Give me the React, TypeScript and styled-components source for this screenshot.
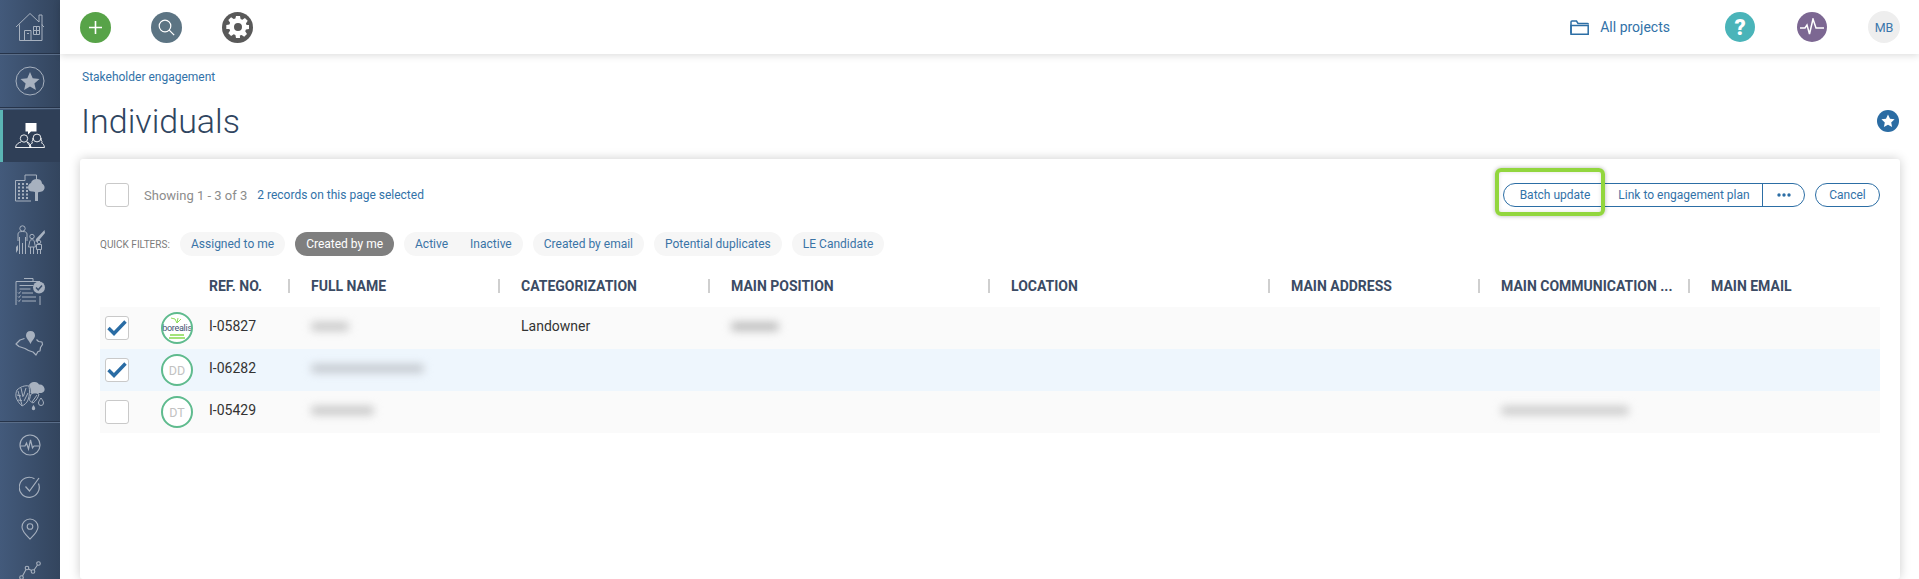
import React from "react";
import styled, { createGlobalStyle } from "styled-components";

const Global = createGlobalStyle`
  html, body { margin: 0; padding: 0; background: #fff; }
  body { font-family: Roboto, "Liberation Sans", sans-serif; }
  * { box-sizing: border-box; }
`;

const Page = styled.div`
  display: flex;
  width: 1919px;
  height: 579px;
  overflow: hidden;
  background: #fff;
`;

const Sidebar = styled.nav`
  width: 60px;
  flex: none;
  height: 579px;
  overflow: hidden;
  background: linear-gradient(90deg, #435a7b 0%, #33455e 100%);
  color: #a7b1bf;
`;

const NavItem = styled.div<{ $h: number; $active?: boolean; $line?: boolean }>`
  height: ${(p) => p.$h}px;
  display: flex;
  align-items: center;
  justify-content: center;
  color: ${(p) => (p.$active ? "#fff" : "inherit")};
  background: ${(p) => (p.$active ? "#2f3f57" : "transparent")};
  border-left: ${(p) => (p.$active ? "3px solid #5bb5b5" : "none")};
  padding-right: ${(p) => (p.$active ? "3px" : "0")};
  border-bottom: ${(p) => (p.$line ? "1px solid #26344a" : "none")};
  box-shadow: ${(p) => (p.$line ? "0 1px 0 #5a6d88" : "none")};
  flex: none;
`;

const Main = styled.div`
  flex: 1;
  min-width: 0;
  display: flex;
  flex-direction: column;
`;

const TopBar = styled.header`
  height: 54px;
  flex: none;
  display: flex;
  align-items: center;
  padding: 0 19px 0 20px;
  background: #fff;
  box-shadow: 0 2px 7px rgba(0, 0, 0, 0.13);
  position: relative;
  z-index: 2;
`;

const Round = styled.div<{ $bg: string; $size?: number }>`
  width: ${(p) => p.$size ?? 31}px;
  height: ${(p) => p.$size ?? 31}px;
  border-radius: 50%;
  background: ${(p) => p.$bg};
  color: #fff;
  display: flex;
  align-items: center;
  justify-content: center;
  flex: none;
`;

const LeftTools = styled.div`
  display: flex;
  gap: 40px;
`;

const RightTools = styled.div`
  margin-left: auto;
  display: flex;
  align-items: center;
`;

const Projects = styled.div`
  display: flex;
  align-items: center;
  gap: 11px;
  color: #3272a8;
  font-size: 14px;
  margin-right: 55px;
`;

const Help = styled(Round)`
  font-size: 22px;
  font-weight: 900;
  margin-right: 42px;
`;

const Activity = styled(Round)`
  margin-right: 41px;
`;

const UserBadge = styled(Round)`
  color: #3a76ab;
  font-size: 12.5px;
`;

const Content = styled.main`
  flex: 1;
  padding: 15px 19px 0 20px;
  display: flex;
  flex-direction: column;
  min-height: 0;
`;

const Crumb = styled.div`
  font-size: 12px;
  line-height: 16px;
  color: #3272a8;
  padding-left: 2px;
`;

const TitleRow = styled.div`
  display: flex;
  align-items: center;
  justify-content: space-between;
  height: 42px;
  margin-top: 15px;
  padding-left: 1px;
`;

const Title = styled.h1`
  margin: 0;
  font-size: 34px;
  font-weight: 300;
  line-height: 42px;
  color: #2f4560;
`;

const StarBadge = styled(Round)`
  margin-right: 1px;
`;

const Card = styled.section`
  flex: 1;
  margin-top: 17px;
  background: #fff;
  border-radius: 3px;
  box-shadow: 0 0 11px rgba(0, 0, 0, 0.2);
  padding: 24px 20px 0;
  position: relative;
`;

const CardBar = styled.div`
  display: flex;
  align-items: center;
  height: 24px;
  padding-left: 5px;
`;

const Box = styled.div`
  width: 24px;
  height: 24px;
  flex: none;
  border: 1px solid #c9c9c9;
  border-radius: 3px;
  background: #fff;
  display: flex;
  align-items: center;
  justify-content: center;
`;

const Showing = styled.span`
  margin-left: 15px;
  font-size: 13px;
  color: #8c8c8c;
`;

const Selected = styled.span`
  margin-left: 10px;
  font-size: 12px;
  color: #3272a8;
`;

const Actions = styled.div`
  margin-left: auto;
  display: flex;
  align-items: center;
  gap: 10px;
`;

const Group = styled.div`
  display: flex;
  height: 24px;
  border: 1px solid #2c6ea5;
  border-radius: 12px;
`;

const GroupBtn = styled.div<{ $w: number; $divided?: boolean }>`
  width: ${(p) => p.$w}px;
  display: flex;
  align-items: center;
  justify-content: center;
  font-size: 12px;
  color: #3272a8;
  border-left: ${(p) => (p.$divided ? "1px solid #2c6ea5" : "none")};
`;

const Cancel = styled.div`
  width: 65px;
  height: 24px;
  border: 1px solid #2c6ea5;
  border-radius: 12px;
  display: flex;
  align-items: center;
  justify-content: center;
  font-size: 12px;
  color: #3272a8;
`;

const Highlight = styled.div`
  position: absolute;
  left: 1415px;
  top: 9px;
  width: 110px;
  height: 48px;
  border: 4px solid #92d63e;
  border-radius: 6px;
  box-shadow: 0 0 4px rgba(0, 0, 0, 0.3), inset 0 0 4px rgba(0, 0, 0, 0.12);
  pointer-events: none;
`;

const Filters = styled.div`
  display: flex;
  align-items: center;
  margin-top: 25px;
  height: 24px;
  gap: 10px;
`;

const FilterLabel = styled.span`
  width: 70px;
  font-size: 10px;
  color: #7b7b7b;
  white-space: nowrap;
  text-transform: uppercase;
`;

const Pill = styled.div<{ $on?: boolean }>`
  height: 24px;
  border-radius: 12px;
  padding: 0 11px;
  display: flex;
  align-items: center;
  gap: 22px;
  font-size: 12px;
  color: ${(p) => (p.$on ? "#fff" : "#3a74a6")};
  background: ${(p) => (p.$on ? "#7f7f7f" : "#f6f6f6")};
  white-space: nowrap;
`;

const columns = "109px 79px 210px 210px 280px 280px 210px 210px 192px";

const HeadRow = styled.div`
  display: grid;
  grid-template-columns: ${columns};
  align-items: center;
  margin-top: 21px;
  height: 18px;
`;

const HeadCell = styled.div<{ $sep?: boolean }>`
  height: 14px;
  line-height: 14px;
  font-size: 14px;
  font-weight: 700;
  color: #3b4b64;
  white-space: nowrap;
  border-left: ${(p) => (p.$sep ? "2px solid #cfcfcf" : "none")};
  padding-left: ${(p) => (p.$sep ? "21px" : "0")};
`;

const Rows = styled.div`
  margin-top: 12px;
`;

const Row = styled.div<{ $tone: string }>`
  display: grid;
  grid-template-columns: ${columns};
  align-items: center;
  height: 42px;
  background: ${(p) => p.$tone};
`;

const Lead = styled.div`
  display: flex;
  align-items: center;
  padding-left: 5px;
`;

const Avatar = styled.div`
  margin-left: 32px;
  width: 32px;
  height: 32px;
  border-radius: 50%;
  border: 2px solid #5fbb8e;
  background: #fff;
  color: #c2c2c2;
  font-size: 12.5px;
  display: flex;
  align-items: center;
  justify-content: center;
  overflow: hidden;
  position: relative;
`;

const Logo = styled.span`
  font-size: 9px;
  color: #3d5270;
  letter-spacing: -0.3px;
`;

const LogoMark = styled.svg`
  position: absolute;
  left: 0;
  top: 0;
`;

const Cell = styled.div<{ $inset?: boolean }>`
  font-size: 14px;
  color: #333;
  padding-bottom: 4px;
  padding-left: ${(p) => (p.$inset ? "23px" : "0")};
  white-space: nowrap;
`;

const Blur = styled.div<{ $w: number; $shade?: string }>`
  width: ${(p) => p.$w}px;
  height: 9px;
  border-radius: 4px;
  background: ${(p) => p.$shade ?? "#c9c9c9"};
  filter: blur(4px);
`;

const Line = styled.svg.attrs({ fill: "none", stroke: "currentColor" })``;

const House = () => (
  <Line width="30" height="30" viewBox="0 0 30 30" strokeWidth="1">
    <path d="M1 15 15 1.500l9 8.500V3h3v10l2 2" />
    <path d="M4.500 12.500V28.500H27V12.500" />
    <path d="M9.500 28.500V18.500h6.500v10" />
    <path d="M12 21.500h2" />
    <path d="M18.500 14.500h6v8h-6zM21.500 14.500v8M18.500 18.500h6" />
  </Line>
);

const StarCircle = () => (
  <Line width="30" height="30" viewBox="0 0 30 30" strokeWidth="1">
    <circle cx="15" cy="15" r="14" />
    <path fill="currentColor" stroke="none" d="m15 6 2.700 6.300 6.800.6-5.100 4.500 1.500 6.600-5.900-3.500-5.900 3.500 1.500-6.600-5.100-4.500 6.800-.6z" />
  </Line>
);

const People = () => (
  <Line width="30" height="26" viewBox="0 0 30 26" strokeWidth="0.900">
    <path fill="currentColor" stroke="none" d="M10.500 0h11v8.500h-5.500l-3 3v-3h-2.500z" />
    <circle cx="9" cy="15.500" r="3.700" />
    <path d="M.5 24.500c.5-3.500 3.500-5 5.500-5.500M12 19c2 .5 3.500 2 4 5.500zM.5 24.500H16" />
    <circle cx="22" cy="15" r="3.900" />
    <path d="M18 15c-.5 2.500-.5 3.500-1.500 4M26 15c.5 2.500.5 3.500 1.500 4M18 19.500c-2 1-3 2-3.500 5h15c-.5-3-1.500-4-3.500-5" />
  </Line>
);

const BuildingTree = () => (
  <Line width="30" height="28" viewBox="0 0 30 28" strokeWidth="1">
    <path d="M.5 27V6.500H10V1h11.500v6M.5 27H16" />
    <path d="M3 10h2M7 10h2M3 13.500h2M7 13.500h2M3 17h2M7 17h2M3 20.500h2M7 20.500h2M3 24h2M7 24h2M11 10h2M11 13.500h2M11 17h2M11 20.500h2M11 24h2" strokeWidth="1.800" />
    <path fill="currentColor" stroke="none" d="M22 5c4 0 5 3 5 4.500 2 1 3 3 2.500 5-.5 2.500-3 3.500-5.500 3.500l-1 .5V27h-3v-9l-2-.5c-3 .5-5-1.500-5-4s1.500-4 3-4.500c.5-2.500 3-4 6-4z" />
  </Line>
);

const Family = () => (
  <Line width="30" height="30" viewBox="0 0 30 30" strokeWidth="1">
    <circle cx="7.500" cy="3.500" r="2.700" />
    <path d="M3 16V9c0-2 2-2.500 4.500-2.500S12 7 12 9v7M4.500 12v17M10.500 12v17M7.500 18v11" />
    <circle cx="17" cy="11.500" r="2.200" />
    <path d="M13.500 22l1.500-6.500c.5-1 3.500-1 4 0l1.500 6.500zM15.500 22v7M18.500 22v7" />
    <circle cx="24" cy="17" r="1.800" />
    <path d="M21.500 19.500h5v5h-5zM22.500 24.500V29M25.500 24.500V29" />
    <path fill="currentColor" stroke="none" d="M29.500 5 30 8l-7.500 9-2-.5L21 14zM1 22l2-2v5l-2 3z" />
  </Line>
);

const Checklist = () => (
  <Line width="30" height="28" viewBox="0 0 30 28" strokeWidth="1">
    <path d="M1 3.500h24M1 3.500V27M25 18v9M9 0.500h9v3" />
    <path d="M4.500 7.500h14M4.500 11h11M7 15h11M7 19h14M7 23h14" />
    <path d="m3 14.500 1 1 1.500-2M3 18.500l1 1 1.500-2M3 22.500l1 1 1.500-2" />
    <circle cx="24" cy="9.500" r="6" fill="currentColor" stroke="none" />
    <path d="m21 9.500 2.200 2.300L27 7.500" stroke="#3b4f6c" strokeWidth="1.500" />
  </Line>
);

const MapPin = () => (
  <Line width="30" height="26" viewBox="0 0 30 26" strokeWidth="1.200" strokeLinejoin="round">
    <path d="M9.500 7.500 5 9 1 13l3 2.500 6 2 3.500 2 4.500 1.500 3 3 2-3.500 2-.5.500-3.500 2-3-.5-2.500-3.500-.5-2-2" />
    <path fill="currentColor" stroke="none" d="M15.500 0c-3 0-4.500 2-4.500 4.500 0 3 3 5 4.500 8.500C17 9.500 20 7.500 20 4.500 20 2 18.500 0 15.500 0z" />
  </Line>
);

const Leaves = () => (
  <Line width="30" height="30" viewBox="0 0 30 30" strokeWidth="1">
    <path d="M2 9C5 6 10 4 14 5c1 5 .5 10-1 14-1 3-4 5-6 6-2-2-5-5-6-9-.3-2.500 0-5 1-7z" />
    <path d="M3 10l4 14M2 14l4 1M3 19l4 .5M6 7l2 9M11 7 8.500 15M13 12l-4 8" />
    <path fill="currentColor" stroke="none" d="M14 4c1-2 3-3.500 6-3 2 0 3 1 4 2.500 3-.5 5 1.500 5.500 4 .5 2-.5 4-3 4.500H15.500c.5-2.500 0-5.500-1.500-8z" />
    <path d="M16 13c3-1.500 5-1.500 8 0-.5 3-3 7-6 9-2-1-3.500-2-3.500-3.500.500-2 1-4 1.500-5.500zM17 21l5-7" />
    <path d="M26 17c-1.500 2.200-2.500 3.500-2.500 5a2.500 2.500 0 0 0 5 0c0-1.500-1-2.800-2.500-5z" />
    <path fill="currentColor" stroke="none" d="M18.500 24c-1 1.500-1.700 2.500-1.700 3.500a1.700 1.700 0 0 0 3.400 0c0-1-.7-2-1.700-3.500z" />
  </Line>
);

const PulseCircle = () => (
  <Line width="22" height="22" viewBox="0 0 22 22" strokeWidth="1.200">
    <circle cx="11" cy="11" r="10" />
    <path d="M1.500 12H6l1.500-3 2 6 2-9 2 8 1.500-2h5" />
  </Line>
);

const CheckCircle = () => (
  <Line width="23" height="23" viewBox="0 0 23 23" strokeWidth="1.200">
    <path d="M19.500 7.500A10 10 0 1 1 15.500 2.800" />
    <path d="m6.500 10.500 4 4.500 9.500-13" />
  </Line>
);

const Pin = () => (
  <Line width="18" height="22" viewBox="0 0 18 22" strokeWidth="1.100">
    <path d="M9 21C5 17 1 13.500 1 9a8 8 0 0 1 16 0c0 4.500-4 8-8 12z" />
    <circle cx="9" cy="8.500" r="2.800" />
  </Line>
);

const Trend = () => (
  <Line width="22" height="20" viewBox="0 0 22 20" strokeWidth="1.100">
    <circle cx="2.500" cy="16.500" r="1.800" />
    <circle cx="8" cy="7" r="1.800" />
    <circle cx="14" cy="10.500" r="1.800" />
    <circle cx="19.500" cy="2.500" r="1.800" />
    <path d="m3.500 15 3.500-6.500M9.500 8l3 1.500M15 9l3.500-5" />
  </Line>
);

const Plus = () => (
  <Line width="15" height="15" viewBox="0 0 15 15" strokeWidth="1.600">
    <path d="M7.500 1v13M1 7.500h13" />
  </Line>
);

const Search = () => (
  <Line width="17" height="17" viewBox="0 0 17 17" strokeWidth="1.200">
    <circle cx="7" cy="7" r="5.800" />
    <path d="m11.200 11.200 5 5" />
  </Line>
);

const Gear = () => (
  <svg width="24" height="24" viewBox="0 0 24 24" fill="#fff">
    <path fillRule="evenodd" d="M10 1h4l.6 3.100 1.700.7 2.600-1.800 2.800 2.800-1.800 2.600.7 1.700L23 10v4l-3.100.6-.7 1.700 1.800 2.600-2.800 2.800-2.600-1.800-1.700.7L14 23h-4l-.6-3.100-1.700-.7L5.100 21l-2.800-2.800 1.800-2.600-.7-1.700L.3 14v-4l3.100-.6.7-1.700L2.300 5.100l2.800-2.800 2.600 1.800 1.700-.7zM12 8a4 4 0 1 0 0 8 4 4 0 0 0 0-8z" />
  </svg>
);

const Folder = () => (
  <svg width="19" height="15" viewBox="0 0 19 15" fill="none" stroke="#2c6ea5" strokeWidth="1.500">
    <path d="M1 13.500V2q0-1 1-1h4.500l1.500 2.500h9.500q.8 0 .8 1" />
    <path d="M1 5.500h17.200v8.700H1z" />
  </svg>
);

const Heartbeat = () => (
  <Line width="26" height="18" viewBox="0 0 26 18" strokeWidth="1.500">
    <path d="M1 10h5l2-3 2.500 9L14 1l3 9h8" />
  </Line>
);

const WhiteStar = () => (
  <svg width="14" height="14" viewBox="0 0 14 14" fill="#fff">
    <path d="m7 .5 2 4.200 4.600.6-3.400 3.200.9 4.600L7 10.800l-4.100 2.300.9-4.600L.4 5.300 5 4.700z" />
  </svg>
);

const Check = () => (
  <svg width="20" height="16" viewBox="0 0 20 16" fill="none" stroke="#2a6ca4" strokeWidth="3.400">
    <path d="m1.500 8 5.500 5.500L18.500 1.500" />
  </svg>
);

const BorealisMark = () => (
  <LogoMark width="28" height="28" viewBox="0 0 28 28" fill="none" stroke="#8ddc5a" strokeWidth="1">
    <path d="m8 4 4 1 2 4 4-4M14 9l1-5" />
    <path d="M7 21h14M6 24h16" strokeWidth="2.200" opacity="0.8" />
  </LogoMark>
);

const heads = ["REF. NO.", "FULL NAME", "CATEGORIZATION", "MAIN POSITION", "LOCATION", "MAIN ADDRESS", "MAIN COMMUNICATION ...", "MAIN EMAIL"];

export default function App() {
  return (
    <Page>
      <Global />
      <Sidebar>
        <NavItem $h={54} $line><House /></NavItem>
        <NavItem $h={54} $line><StarCircle /></NavItem>
        <NavItem $h={2} />
        <NavItem $h={52} $active><People /></NavItem>
        <NavItem $h={52}><BuildingTree /></NavItem>
        <NavItem $h={52}><Family /></NavItem>
        <NavItem $h={52}><Checklist /></NavItem>
        <NavItem $h={52}><MapPin /></NavItem>
        <NavItem $h={52} $line><Leaves /></NavItem>
        <NavItem $h={2} />
        <NavItem $h={42}><PulseCircle /></NavItem>
        <NavItem $h={42}><CheckCircle /></NavItem>
        <NavItem $h={42}><Pin /></NavItem>
        <NavItem $h={42}><Trend /></NavItem>
      </Sidebar>
      <Main>
        <TopBar>
          <LeftTools>
            <Round $bg="#57a348"><Plus /></Round>
            <Round $bg="#5c7483"><Search /></Round>
            <Round $bg="#595959"><Gear /></Round>
          </LeftTools>
          <RightTools>
            <Projects><Folder />All projects</Projects>
            <Help $bg="#4ab4b9" $size={30}>?</Help>
            <Activity $bg="#7c6792" $size={30}><Heartbeat /></Activity>
            <UserBadge $bg="#eeeeee" $size={32}>MB</UserBadge>
          </RightTools>
        </TopBar>
        <Content>
          <Crumb>Stakeholder engagement</Crumb>
          <TitleRow>
            <Title>Individuals</Title>
            <StarBadge $bg="#2b6ca3" $size={22}><WhiteStar /></StarBadge>
          </TitleRow>
          <Card>
            <CardBar>
              <Box />
              <Showing>Showing 1 - 3 of 3</Showing>
              <Selected>2 records on this page selected</Selected>
              <Actions>
                <Group>
                  <GroupBtn $w={102}>Batch update</GroupBtn>
                  <GroupBtn $w={156}>Link to engagement plan</GroupBtn>
                  <GroupBtn $w={42} $divided>
                    <svg width="14" height="4" viewBox="0 0 14 4" fill="#2c6ea5">
                      <circle cx="2" cy="2" r="1.700" />
                      <circle cx="7" cy="2" r="1.700" />
                      <circle cx="12" cy="2" r="1.700" />
                    </svg>
                  </GroupBtn>
                </Group>
                <Cancel>Cancel</Cancel>
              </Actions>
            </CardBar>
            <Highlight />
            <Filters>
              <FilterLabel>Quick filters:</FilterLabel>
              <Pill>Assigned to me</Pill>
              <Pill $on>Created by me</Pill>
              <Pill><span>Active</span><span>Inactive</span></Pill>
              <Pill>Created by email</Pill>
              <Pill>Potential duplicates</Pill>
              <Pill>LE Candidate</Pill>
            </Filters>
            <HeadRow>
              <span />
              {heads.map((h, i) => (
                <HeadCell key={h} $sep={i > 0}>{h}</HeadCell>
              ))}
            </HeadRow>
            <Rows>
              <Row $tone="#fafafa">
                <Lead>
                  <Box><Check /></Box>
                  <Avatar><BorealisMark /><Logo>borealis</Logo></Avatar>
                </Lead>
                <Cell>I-05827</Cell>
                <Cell $inset><Blur $w={38} /></Cell>
                <Cell $inset>Landowner</Cell>
                <Cell $inset><Blur $w={48} $shade="#bdbdbd" /></Cell>
              </Row>
              <Row $tone="#eef6fd">
                <Lead>
                  <Box><Check /></Box>
                  <Avatar>DD</Avatar>
                </Lead>
                <Cell>I-06282</Cell>
                <Cell $inset><Blur $w={113} $shade="#c5cad0" /></Cell>
              </Row>
              <Row $tone="#fafafa">
                <Lead>
                  <Box />
                  <Avatar>DT</Avatar>
                </Lead>
                <Cell>I-05429</Cell>
                <Cell $inset><Blur $w={63} /></Cell>
                <Cell />
                <Cell />
                <Cell />
                <Cell />
                <Cell $inset><Blur $w={128} $shade="#cccccc" /></Cell>
              </Row>
            </Rows>
          </Card>
        </Content>
      </Main>
    </Page>
  );
}
